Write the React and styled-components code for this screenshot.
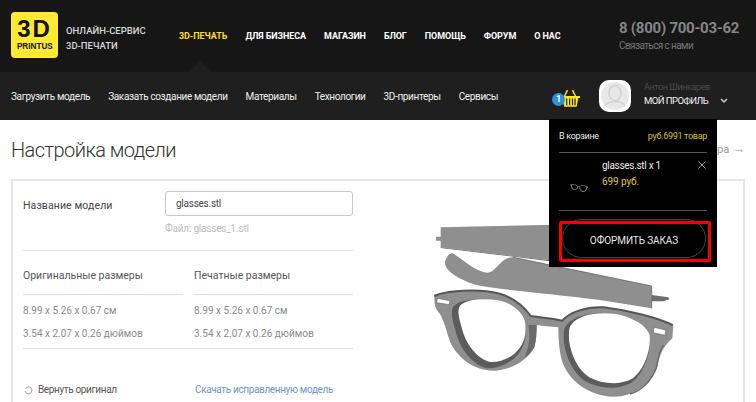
import React from 'react';
import styled, { createGlobalStyle } from 'styled-components';

const GlobalStyle = createGlobalStyle`
    html, body {
        margin: 0;
        height: 402px;
        overflow: hidden;
        background: #fff;
        font-family: Roboto, "Open Sans", sans-serif;
    }
`;

const mainLinks = [
    { label: '3D-ПЕЧАТЬ', active: true },
    { label: 'ДЛЯ БИЗНЕСА' },
    { label: 'МАГАЗИН' },
    { label: 'БЛОГ' },
    { label: 'ПОМОЩЬ' },
    { label: 'ФОРУМ' },
    { label: 'О НАС' },
];
const subLinks = ['Загрузить модель', 'Заказать создание модели', 'Материалы', 'Технологии', '3D-принтеры', 'Сервисы'];

const BasketIcon = () => (
    <svg width="20" height="21" viewBox="0 0 24 22" fill="#ffe620">
        <path d="M9 1 5.500 8M15 1l3.500 7" stroke="#ffe620" strokeWidth="1.800" fill="none" />
        <path d="M0 8h24v2.500h-2L20 21H5L3 10.500H0z" />
        <path d="M8 11v8M11.500 11v8M15 11v8M18 11v8" stroke="#1f1f1f" strokeWidth="1.400" />
    </svg>
);

const AvatarIcon = () => (
    <svg width="32" height="32" viewBox="0 0 32 32">
        <rect width="32" height="32" rx="10" fill="#fff" />
        <circle cx="16" cy="16" r="14" fill="#e8e8e8" />
        <ellipse cx="16" cy="13" rx="6" ry="7.500" fill="none" stroke="#d2d2d2" strokeWidth="1.500" />
        <path d="M6 26c2-4 6-4.500 10-4.500S24 22 26 26" fill="none" stroke="#d2d2d2" strokeWidth="1.500" />
    </svg>
);

const Chevron = () => (
    <ChevronMark width="8" height="6" viewBox="0 0 8 6">
        <path d="M1 1l3 3 3-3" fill="none" stroke="#ccc" strokeWidth="1.500" />
    </ChevronMark>
);

const CrossIcon = () => (
    <svg width="8" height="8" viewBox="0 0 8 8">
        <path d="M.5.5l7 7M7.500.5l-7 7" stroke="#999" strokeWidth="1" />
    </svg>
);

const frameOutline = 'M103 258C130 245 200 238 260 244C320 250 365 280 392 318C420 322 460 325 487 332C510 305 560 290 610 292C680 300 770 322 820 345L817 385C795 405 780 425 772 470C755 520 700 560 640 560C570 558 505 515 485 450C477 420 475 380 475 352C450 350 430 348 410 345C410 370 408 395 403 412C385 450 330 482 280 482C220 482 170 440 150 395C140 365 135 340 120 312C110 300 103 295 103 258Z';
const leftLens = 'M160 290C180 266 240 264 290 272C335 281 374 316 376 350C380 390 369 424 338 449C312 468 280 478 256 474C216 460 188 424 173 384C163 349 148 310 160 290Z';
const rightLens = 'M500 345C520 316 580 304 640 312C690 321 739 346 749 380C754 430 729 494 693 519C652 541 598 536 556 514C519 489 499 444 492 399C491 372 490 355 500 345Z';

// lens prop: what shows through the lens, white on the page, black in the cart panel
const GlassesFrame = ({ lens }) => (
    <>
        <path d={frameOutline} fill="#8f8f8f" />
        <path d={leftLens} fill="#5c5c5c" />
        <path d={leftLens} fill={lens} transform="translate(376 268) scale(.91) translate(-376 -268)" />
        <path d={rightLens} fill="#5c5c5c" />
        <path d={rightLens} fill={lens} transform="translate(749 312) scale(.94) translate(-749 -312)" />
        <path d="M385 345 410 345C410 370 408 395 403 412C395 425 385 435 372 445C385 420 392 385 385 345Z" fill="#6a6a6a" />
        <path d="M103 258C130 245 200 238 260 244C320 250 365 280 392 318C420 322 460 325 487 332C510 305 560 290 610 292C680 300 770 322 818 345" fill="none" stroke="#555" strokeWidth="6" />
        <path d="M790 405C778 425 774 445 770 470C755 515 720 545 690 552" fill="none" stroke="#666" strokeWidth="4" />
        <path d="M112 265 150 272 148 284 110 278ZM762 352 798 360 795 376 760 368Z" fill={lens} stroke="#666" strokeWidth="2" />
    </>
);

// the model in the viewer; coordinates are the 3x crop of the canvas
const GlassesModel = () => (
    <svg width="300" height="192" viewBox="0 0 900 576">
        <path d="M108 80h14V52l340-8v108L122 112V92h-14z" fill="#8f8f8f" />
        <path d="M122 112 462 152v3L122 114z" fill="#666" />
        <path d="M755 255 805 262 808 268 790 274H755z" fill="#6d6d6d" />
        <path d="M135 160C135 145 148 128 158 130C185 145 225 185 260 188C290 190 300 140 340 142L755 228V295L600 270C450 250 300 240 230 225C190 215 135 185 135 160Z" fill="#8f8f8f" />
        <path d="M340 142 755 228V295" fill="none" stroke="#555" strokeWidth="2" />
        <GlassesFrame lens="#fff" />
    </svg>
);

const GlassesThumb = () => (
    <svg width="18" height="10" viewBox="90 235 740 330">
        <GlassesFrame lens="#000" />
    </svg>
);

const App = () => {
    return (
        <Page>
            <GlobalStyle />
            <TopBar>
                <Logo>
                    <LogoMark>3D</LogoMark>
                    <LogoName>PRINTUS</LogoName>
                </Logo>
                <Tagline>ОНЛАЙН-СЕРВИС<br />3D-ПЕЧАТИ</Tagline>
                <MainNav>
                    {mainLinks.map((link) => (
                        <MainLink key={link.label} $active={link.active}>{link.label}</MainLink>
                    ))}
                </MainNav>
                <Contacts>
                    <Phone>8 (800) 700-03-62</Phone>
                    <ContactLink>Связаться с нами</ContactLink>
                </Contacts>
            </TopBar>
            <SubBar>
                <SubNav>
                    {subLinks.map((link) => <SubLink key={link}>{link}</SubLink>)}
                </SubNav>
                <CartButton>
                    <BasketIcon />
                    <CartBadge>1</CartBadge>
                </CartButton>
                <AvatarIcon />
                <Profile>
                    <ProfileName>Антон Шинкарев</ProfileName>
                    <ProfileLink>МОЙ ПРОФИЛЬ</ProfileLink>
                </Profile>
                <Chevron />
            </SubBar>

            <CartPanel>
                <CartHead>
                    <span>В корзине</span>
                    <CartTotal>руб.6991 товар</CartTotal>
                </CartHead>
                <CartItem>
                    <CartThumb><GlassesThumb /></CartThumb>
                    <div>
                        <ItemName>glasses.stl x 1</ItemName>
                        <ItemPrice>699 руб.</ItemPrice>
                    </div>
                    <RemoveItem><CrossIcon /></RemoveItem>
                </CartItem>
                <CheckoutWrap>
                    <Checkout>ОФОРМИТЬ ЗАКАЗ</Checkout>
                    <Highlight />
                </CheckoutWrap>
            </CartPanel>

            <Content>
                <TitleRow>
                    <Title>Настройка модели</Title>
                    <BackLink>Назад к выбору принтера <Arrow>→</Arrow></BackLink>
                </TitleRow>
                <Card>
                    <Form>
                        <NameRow>
                            <Label>Название модели</Label>
                            <NameField>
                                <NameInput>glasses.stl</NameInput>
                                <FileHint>Файл: glasses_1.stl</FileHint>
                            </NameField>
                        </NameRow>
                        <Sizes>
                            <SizeColumn>
                                <SizeTitle>Оригинальные размеры</SizeTitle>
                                <SizeValue>8.99 x 5.26 x 0.67 см</SizeValue>
                                <SizeValue>3.54 x 2.07 x 0.26 дюймов</SizeValue>
                            </SizeColumn>
                            <SizeColumn>
                                <SizeTitle>Печатные размеры</SizeTitle>
                                <SizeValue>8.99 x 5.26 x 0.67 см</SizeValue>
                                <SizeValue>3.54 x 2.07 x 0.26 дюймов</SizeValue>
                            </SizeColumn>
                        </Sizes>
                        <Actions>
                            <Restore>
                                <svg width="9" height="9" viewBox="0 0 9 9">
                                    <path d="M1.500 2.500A3.500 3.500 0 1 1 1 5" fill="none" stroke="#999" strokeWidth="1" />
                                </svg>
                                Вернуть оригинал
                            </Restore>
                            <Download>Скачать исправленную модель</Download>
                        </Actions>
                    </Form>
                    <Viewer>
                        <GlassesModel />
                    </Viewer>
                </Card>
            </Content>
        </Page>
    );
};

const Page = styled.div`
    position: relative;
    width: 756px;
    height: 402px;
    overflow: hidden;
`;

const TopBar = styled.header`
    position: relative;
    height: 72px;
    box-sizing: border-box;
    padding: 12px 0 0 11px;
    display: flex;
    align-items: flex-start;
    background: #161616;
    &::after {
        content: '';
        position: absolute;
        left: 189px;
        bottom: 0;
        border-left: 11px solid transparent;
        border-right: 11px solid transparent;
        border-bottom: 11px solid #1f1f1f;
    }
`;

const Logo = styled.div`
    width: 47px;
    height: 46px;
    flex: none;
    border-radius: 4px;
    background: #ffe933;
    color: #111;
    display: flex;
    flex-direction: column;
    align-items: center;
    font-family: "Liberation Sans", sans-serif;
    font-weight: 700;
`;

const LogoMark = styled.div`
    font-size: 24px;
    line-height: 22px;
    margin-top: 6px;
    letter-spacing: 2px;
`;

const LogoName = styled.div`
    font-size: 9.5px;
    line-height: 11px;
    transform: scaleX(0.86);
`;

const Tagline = styled.div`
    width: 113px;
    margin: 11px 0 0 8px;
    flex: none;
    font-size: 9.5px;
    line-height: 15px;
    font-weight: 500;
    color: #d8d8d8;
`;

const MainNav = styled.nav`
    width: 391px;
    margin-top: 18px;
    flex: none;
    display: flex;
    gap: 18px;
`;

const MainLink = styled.a`
    font-size: 9px;
    line-height: 12px;
    font-weight: 700;
    letter-spacing: -0.08px;
    white-space: nowrap;
    color: ${(props) => (props.$active ? '#ffdf1f' : '#fff')};
`;

const Contacts = styled.div`
    margin: 7px 0 0 49px;
    white-space: nowrap;
`;

const Phone = styled.div`
    font-size: 15px;
    line-height: 18px;
    font-weight: 700;
    letter-spacing: -0.25px;
    color: #858585;
`;

const ContactLink = styled.div`
    margin-top: 2px;
    font-size: 10px;
    line-height: 14px;
    letter-spacing: -0.6px;
    color: #777;
`;

const SubBar = styled.div`
    height: 48px;
    box-sizing: border-box;
    padding-left: 11px;
    display: flex;
    align-items: center;
    background: #1f1f1f;
`;

const SubNav = styled.nav`
    width: 546px;
    flex: none;
    display: flex;
    gap: 18px;
`;

const SubLink = styled.a`
    font-size: 10px;
    letter-spacing: -0.35px;
    white-space: nowrap;
    color: #f0f0f0;
`;

const CartButton = styled.div`
    position: relative;
    width: 42px;
    height: 21px;
    box-sizing: border-box;
    padding-left: 3px;
    flex: none;
    margin-top: 4px;
`;

const CartBadge = styled.span`
    position: absolute;
    left: -5px;
    top: 5px;
    width: 13px;
    height: 13px;
    border-radius: 50%;
    background: #2a93dc;
    color: #fff;
    font-size: 9px;
    line-height: 13px;
    font-weight: 700;
    text-align: center;
`;

const Profile = styled.div`
    width: 76px;
    margin: 0 0 4px 13px;
    flex: none;
    white-space: nowrap;
`;

const ProfileName = styled.div`
    font-size: 9px;
    line-height: 13px;
    letter-spacing: -0.4px;
    color: #4a4a4a;
`;

const ProfileLink = styled.div`
    font-size: 9.5px;
    line-height: 13px;
    letter-spacing: -0.55px;
    color: #f4f4f4;
`;

const ChevronMark = styled.svg`
    margin-top: 10px;
`;

const CartPanel = styled.aside`
    position: absolute;
    left: 549px;
    top: 119px;
    z-index: 2;
    width: 168px;
    height: 148px;
    box-sizing: border-box;
    padding: 0 10px;
    background: #000;
    color: #ececec;
`;

const CartHead = styled.div`
    height: 34px;
    box-sizing: border-box;
    padding-top: 11px;
    display: flex;
    justify-content: space-between;
    font-size: 9px;
    line-height: 12px;
    letter-spacing: -0.3px;
    border-bottom: 1px solid #555;
`;

const CartTotal = styled.span`
    color: #d9c316;
`;

const CartItem = styled.div`
    position: relative;
    height: 58px;
    box-sizing: border-box;
    padding-top: 5px;
    display: flex;
    border-bottom: 1px solid #555;
`;

const CartThumb = styled.div`
    width: 43px;
    padding: 20px 0 0 11px;
    box-sizing: border-box;
    flex: none;
`;

const ItemName = styled.div`
    font-size: 10px;
    line-height: 16px;
    letter-spacing: -0.3px;
`;

const ItemPrice = styled.div`
    font-size: 10px;
    line-height: 16px;
    letter-spacing: -0.1px;
    color: #e1c91a;
`;

const RemoveItem = styled.span`
    position: absolute;
    right: 1px;
    top: 8px;
    line-height: 0;
`;

const CheckoutWrap = styled.div`
    position: relative;
    margin-top: 8px;
`;

const Checkout = styled.div`
    height: 39px;
    margin: 0 0 0 3px;
    width: 144px;
    border: 1px solid #444;
    border-radius: 20px;
    box-sizing: border-box;
    text-align: center;
    font-size: 10px;
    line-height: 41px;
    letter-spacing: -0.1px;
    color: #e8e8e8;
`;

const Highlight = styled.div`
    position: absolute;
    left: 0;
    top: 2px;
    width: 152px;
    height: 41px;
    box-sizing: border-box;
    border: 3px solid #f60000;
    border-radius: 2px;
`;

const Content = styled.main`
    padding: 0 11px;
`;

const TitleRow = styled.div`
    height: 59px;
    box-sizing: border-box;
    padding-top: 17px;
    display: flex;
    justify-content: space-between;
`;

const Title = styled.h1`
    margin: 0;
    font-size: 20px;
    line-height: 26px;
    font-weight: 300;
    letter-spacing: -0.55px;
    color: #333;
`;

const BackLink = styled.a`
    padding-top: 5px;
    font-size: 11px;
    line-height: 14px;
    color: #999;
`;

const Arrow = styled.span`
    font-size: 13px;
`;

const Card = styled.section`
    width: 734px;
    height: 240px;
    box-sizing: border-box;
    padding: 10px 0 0 10px;
    border: 2px solid #e6e6e6;
    border-bottom: 0;
    display: flex;
`;

const Form = styled.div`
    width: 330px;
    flex: none;
`;

const NameRow = styled.div`
    height: 59px;
    display: flex;
    border-bottom: 1px solid #e0e0e0;
`;

const Label = styled.div`
    width: 142px;
    padding-top: 8px;
    font-size: 10.5px;
    line-height: 14px;
    letter-spacing: 0.1px;
    color: #444;
`;

const NameField = styled.div`
    flex: 1;
`;

const NameInput = styled.div`
    height: 25px;
    box-sizing: border-box;
    padding-left: 10px;
    border: 1px solid #c8c8c8;
    border-radius: 3px;
    font-size: 10px;
    line-height: 23px;
    letter-spacing: -0.25px;
    color: #444;
`;

const FileHint = styled.div`
    margin-top: 6px;
    font-size: 10px;
    line-height: 13px;
    letter-spacing: -0.2px;
    color: #bbb;
`;

const Sizes = styled.div`
    display: grid;
    grid-template-columns: 160px 159px;
    column-gap: 11px;
    height: 98px;
    box-sizing: border-box;
    border-bottom: 1px solid #e0e0e0;
`;

const SizeColumn = styled.div`
    padding-top: 18px;
`;

const SizeTitle = styled.div`
    height: 25px;
    margin-bottom: 9px;
    border-bottom: 1px solid #e0e0e0;
    font-size: 10.5px;
    line-height: 14px;
    color: #555;
`;

const SizeValue = styled.div`
    height: 23px;
    font-size: 10px;
    line-height: 13px;
    color: #8a8a8a;
`;

const Actions = styled.div`
    margin-top: 34px;
    display: flex;
    font-size: 10px;
    line-height: 14px;
    letter-spacing: -0.36px;
`;

const Restore = styled.div`
    width: 172px;
    padding-left: 1px;
    box-sizing: border-box;
    display: flex;
    align-items: center;
    gap: 5px;
    color: #555;
`;

const Download = styled.a`
    color: #6f92cc;
    white-space: nowrap;
`;

const Viewer = styled.div`
    margin: 19px 0 0 47px;
    flex: none;
`;

export default App;
